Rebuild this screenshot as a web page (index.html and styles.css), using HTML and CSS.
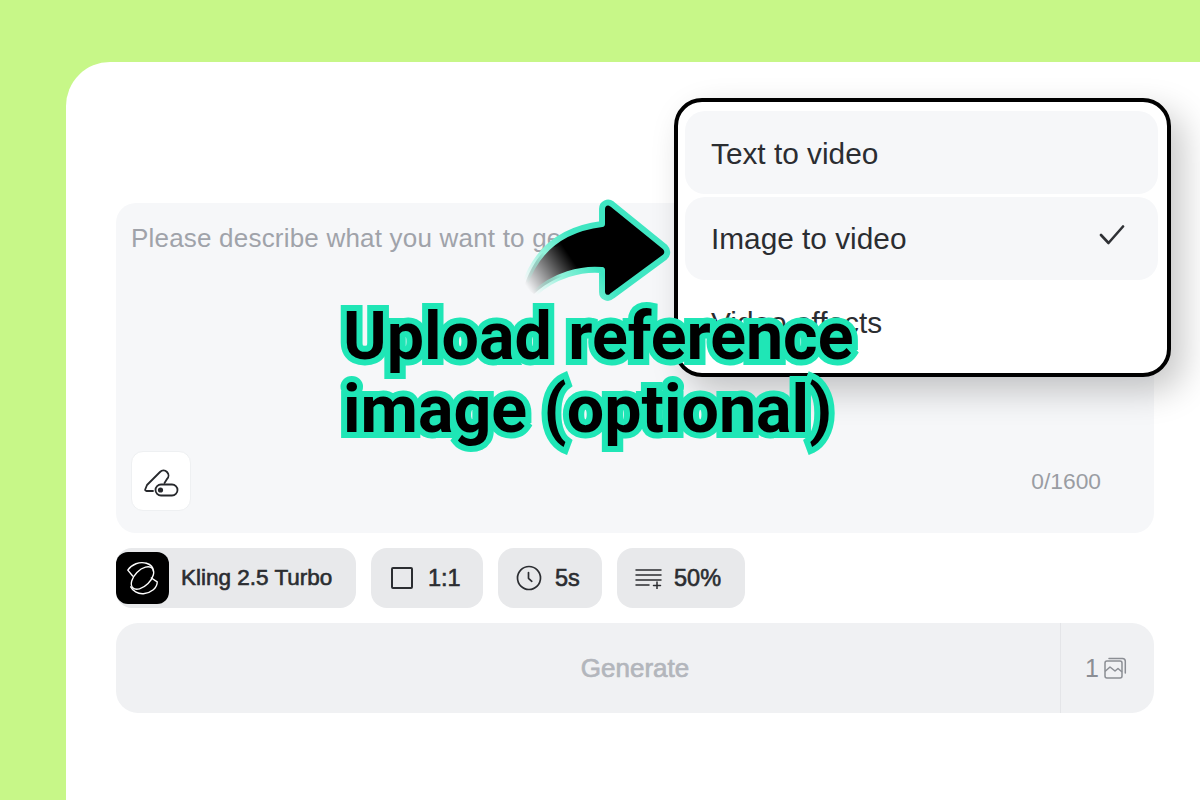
FILE: index.html
```html
<!DOCTYPE html>
<html lang="en">
<head>
<meta charset="utf-8">
<title>Image to video</title>
<link rel="stylesheet" href="styles.css">
</head>
<body>
<main class="card">
  <section class="prompt">
    <p class="placeholder">Please describe what you want to generate</p>
    <div class="prompt-foot">
      <button class="tool-btn" aria-label="Prompt tool">
        <svg width="44" height="40" viewBox="0 0 44 40" fill="none" stroke="#26282c" stroke-width="1.800" stroke-linecap="round" stroke-linejoin="round">
          <path d="M14 30H7.500C6.500 30 6 29.300 6.200 28.500L8 24 21 11C23 9 26 9 28 11 30 13 30 16 28 18L25.500 22"/>
          <rect x="16.500" y="23.500" width="22" height="11" rx="5.500"/>
          <circle cx="21.500" cy="29" r="2.600" fill="#26282c" stroke="none"/>
        </svg>
      </button>
      <span class="count">0/1600</span>
    </div>
  </section>

  <div class="chips">
    <div class="chip chip-model">
      <span class="logo">
        <svg width="53" height="52" viewBox="0 0 54 52" fill="none" stroke="#fff" stroke-width="1.400" stroke-linecap="round" stroke-linejoin="round">
          <ellipse cx="27" cy="26" rx="14" ry="8" transform="rotate(-45 27 26)"/>
          <path d="M17 24L12 18C16 12 24 9 31 11 36 12.500 38 16 38 19"/>
          <path d="M36 26L42 30C42 36 36 41 28 42 22 42.500 17 39 15 35"/>
        </svg>
      </span>
      <span>Kling 2.5 Turbo</span>
    </div>
    <div class="chip chip-ratio">
      <svg width="22" height="22" viewBox="0 0 22 22" fill="none" stroke="#2b2d31" stroke-width="2"><rect x="1" y="1" width="20" height="20" rx="1"/></svg>
      <span>1:1</span>
    </div>
    <div class="chip chip-time">
      <svg width="26" height="26" viewBox="0 0 26 26" fill="none" stroke="#2b2d31" stroke-width="1.700" stroke-linecap="round" stroke-linejoin="round"><circle cx="13" cy="13" r="11.500"/><path d="M12.500 7.500v5.800l3.300 3"/></svg>
      <span>5s</span>
    </div>
    <div class="chip chip-pct">
      <svg width="28" height="22" viewBox="0 0 28 22" fill="none" stroke="#2b2d31" stroke-width="1.500" stroke-linecap="round"><path d="M1 3h25M1 8h25M1 13h25M1 18h13M22 15v7M18.500 18.500h7"/></svg>
      <span>50%</span>
    </div>
  </div>

  <div class="generate">
    <span class="generate-label">Generate</span>
    <span class="credits">
      <span>1</span>
      <svg width="23" height="23" viewBox="0 0 23 23" fill="none" stroke="#8b8e94" stroke-width="1.500" stroke-linejoin="round" stroke-linecap="round">
        <rect x="1" y="4" width="17" height="17" rx="2"/>
        <path d="M5 1.500h13.500c1.600 0 2.800 1.200 2.800 2.800V16"/>
        <path d="M1.500 14l4.500-4 5 4 3-2.500 3.500 3"/>
      </svg>
    </span>
  </div>

  <div class="menu">
    <div class="menu-item shaded first">Text to video</div>
    <div class="menu-item shaded">
      <span>Image to video</span>
      <svg class="check" width="28" height="22" viewBox="0 0 28 22" fill="none" stroke="#2f3135" stroke-width="2.600" stroke-linecap="round" stroke-linejoin="round"><path d="M3 10l7.500 8L25 1.500"/></svg>
    </div>
    <div class="menu-item last">Video effects</div>
  </div>

  <svg class="arrow" width="170" height="120" viewBox="0 0 170 120">
    <defs>
      <linearGradient id="fadeFill" gradientUnits="userSpaceOnUse" x1="26" y1="92" x2="70" y2="62">
        <stop offset="0" stop-color="#000" stop-opacity="0"/>
        <stop offset="1" stop-color="#000"/>
      </linearGradient>
      <linearGradient id="fadeLine" gradientUnits="userSpaceOnUse" x1="24" y1="85" x2="75" y2="45">
        <stop offset="0" stop-color="#9ff4e0" stop-opacity="0"/>
        <stop offset="0.500" stop-color="#8ff2da"/>
        <stop offset="1" stop-color="#3fe6c2"/>
      </linearGradient>
    </defs>
    <path d="M22 90C34 52 60 32 100 27V12C100 6 106 4 110 7L163 50C166 53 166 57 163 60L110 99C106 103 100 100 100 95V73C80 71 52 78 32 97Z" fill="url(#fadeFill)" stroke="url(#fadeLine)" stroke-width="6" stroke-linejoin="round"/>
  </svg>

  <h1 class="caption">Upload reference<br>image (optional)</h1>
</main>
</body>
</html>
```

FILE: styles.css
```css
* {
  box-sizing: border-box;
}

html,
body {
  margin: 0;
  height: 100%;
  overflow: hidden;
}

body {
  background: #c7f788;
  padding: 62px 0 0 66px;
  font-family: "Liberation Sans", Arial, sans-serif;
  color: #2b2d31;
}

.card {
  position: relative;
  height: 738px;
  background: #fff;
  border-top-left-radius: 44px;
  padding: 141px 46px 0 50px;
}

.prompt {
  height: 330px;
  background: #f6f7f9;
  border-radius: 20px;
  padding: 20px 53px 22px 15px;
  display: flex;
  flex-direction: column;
  justify-content: space-between;
}

.placeholder {
  margin: 0;
  font-size: 26px;
  line-height: 30px;
  letter-spacing: 0.200px;
  color: #a0a3aa;
  white-space: nowrap;
  overflow: hidden;
}

.prompt-foot {
  display: flex;
  justify-content: space-between;
  align-items: center;
}

.tool-btn {
  width: 60px;
  height: 60px;
  padding: 0;
  background: #fff;
  border: 1px solid #eef0f2;
  border-radius: 12px;
  display: flex;
  align-items: center;
  justify-content: center;
}

.count {
  font-size: 22.800px;
  color: #9a9da3;
}

.chips {
  display: flex;
  gap: 15px;
  margin-top: 15px;
}

.chip {
  height: 60px;
  background: #e8e9eb;
  border-radius: 16px;
  display: flex;
  align-items: center;
  font-size: 23.500px;
  -webkit-text-stroke: 0.600px #2b2d31;
}

.chip-model {
  width: 240px;
  font-size: 22.500px;
  gap: 12px;
}

.logo {
  width: 53px;
  height: 52px;
  background: #000;
  border-radius: 12px;
  display: flex;
  align-items: center;
  justify-content: center;
}

.chip-ratio {
  width: 112px;
  padding-left: 20px;
  gap: 15px;
}

.chip-time {
  width: 104px;
  padding-left: 18px;
  gap: 13px;
}

.chip-pct {
  width: 128px;
  padding-left: 18px;
  gap: 11px;
}

.generate {
  height: 90px;
  margin-top: 15px;
  padding-left: 94px;
  background: #f0f1f3;
  border-radius: 22px;
  display: flex;
  align-items: center;
}

.generate-label {
  flex: 1;
  text-align: center;
  font-size: 26px;
  color: #b3b6bc;
  -webkit-text-stroke: 0.700px #b3b6bc;
}

.credits {
  width: 94px;
  height: 100%;
  border-left: 1px solid #e4e5e8;
  display: flex;
  align-items: center;
  justify-content: center;
  gap: 5px;
  font-size: 25px;
  color: #8b8e94;
  padding-right: 3px;
}

.menu {
  position: absolute;
  left: 608px;
  top: 36px;
  width: 497px;
  height: 279px;
  background: #fff;
  border: 4px solid #000;
  border-radius: 28px;
  padding: 9px 9px 0 7px;
  display: flex;
  flex-direction: column;
  gap: 3px;
  box-shadow: 12px 14px 34px rgba(0, 0, 0, 0.22);
}

.menu-item {
  height: 83px;
  padding: 0 32px 0 26px;
  display: flex;
  align-items: center;
  justify-content: space-between;
  font-size: 29.800px;
  color: #2b2d31;
  border-radius: 20px;
}

.shaded {
  background: #f6f7f9;
}

.first {
  padding-top: 2px;
}

.last {
  margin-top: -3px;
  height: 85px;
}

.check {
  margin: 0 0 6px 0;
}

.arrow {
  position: absolute;
  left: 436px;
  top: 135px;
}

.caption {
  position: absolute;
  left: 277px;
  top: 238px;
  margin: 0;
  font-family: Roboto, "Liberation Sans", sans-serif;
  font-size: 66.300px;
  font-weight: 700;
  line-height: 73px;
  color: #000;
  -webkit-text-stroke: 12px #1fe6b6;
  paint-order: stroke fill;
  white-space: nowrap;
}
```
